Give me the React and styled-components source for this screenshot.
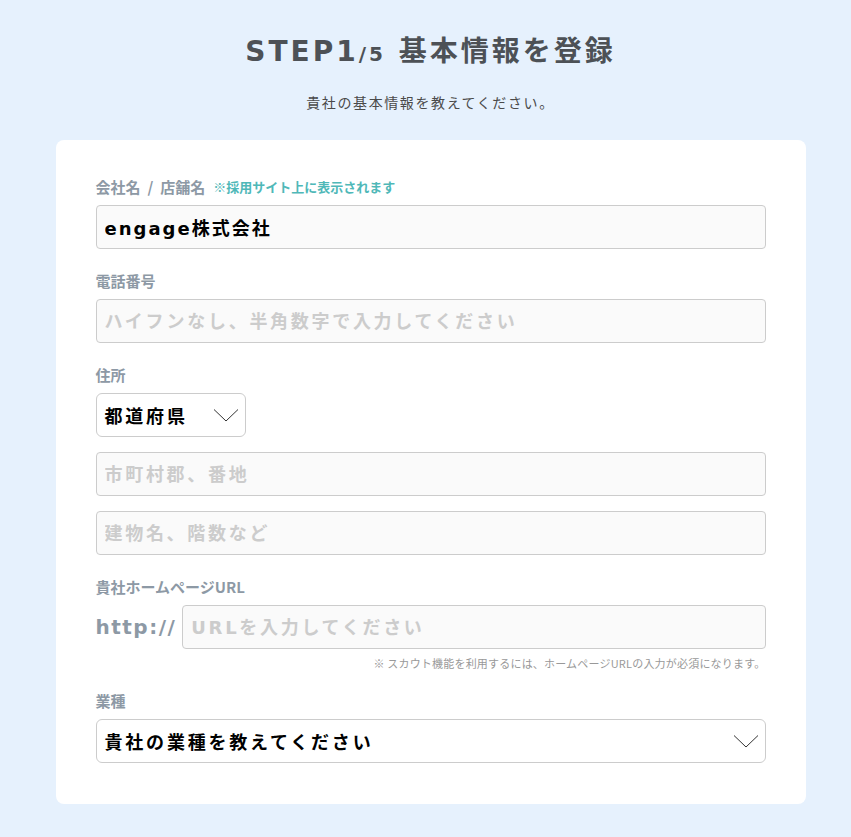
import React from 'react';
import styled, { createGlobalStyle } from 'styled-components';

const GlobalStyle = createGlobalStyle`
  body {
    margin: 0;
    background: #e6f1fd;
    font-family: "DejaVu Sans", "Noto Sans CJK JP", sans-serif;
  }
`;

const Chevron = ({ size = 26 }) => (
  <svg width={size} height={size / 2 + 2} viewBox="0 0 26 15" fill="none">
    <path d="M1 1.5 L13 13 L25 1.5" stroke="#333" strokeWidth="1" />
  </svg>
);

const App = () => (
  <Page>
    <GlobalStyle />
    <Title>
      STEP1<Small>/5</Small> 基本情報を登録
    </Title>
    <Lead>貴社の基本情報を教えてください。</Lead>
    <Card>
      <Field>
        <Label>
          会社名<Slash>/</Slash>店舗名<Note>※採用サイト上に表示されます</Note>
        </Label>
        <Input defaultValue="engage株式会社" />
      </Field>

      <Field>
        <Label>電話番号</Label>
        <Input placeholder="ハイフンなし、半角数字で入力してください" />
      </Field>

      <Field>
        <Label>住所</Label>
        <Stack>
          <Select $width="150px">
            <span>都道府県</span>
            <Chevron />
          </Select>
          <Input placeholder="市町村郡、番地" />
          <Input placeholder="建物名、階数など" />
        </Stack>
      </Field>

      <Field>
        <Label>貴社ホームページURL</Label>
        <UrlRow>
          <Prefix>http://</Prefix>
          <Input placeholder="URLを入力してください" />
        </UrlRow>
        <Hint>※ スカウト機能を利用するには、ホームページURLの入力が必須になります。</Hint>
      </Field>

      <Field>
        <Label>業種</Label>
        <Select>
          <span>貴社の業種を教えてください</span>
          <Chevron />
        </Select>
      </Field>
    </Card>
  </Page>
);

export default App;

// Styling
const Page = styled.div`
  display: flex;
  flex-direction: column;
  align-items: center;
  padding: 32px 0 34px 10px;
`;

const Title = styled.h1`
  margin: 0;
  font-size: 28px;
  line-height: 40px;
  font-weight: bold;
  letter-spacing: 3px;
  color: #4d5156;
`;

const Small = styled.span`
  font-size: 20px;
`;

const Lead = styled.p`
  margin: 18px 0 0;
  font-family: "Noto Sans CJK JP", sans-serif;
  font-size: 14px;
  line-height: 20px;
  letter-spacing: 1.6px;
  color: #4a4a4a;
`;

const Card = styled.div`
  margin-top: 28px;
  width: 750px;
  box-sizing: border-box;
  padding: 38px 40px 41px;
  background: #fff;
  border-radius: 8px;
  display: flex;
  flex-direction: column;
  gap: 23px;
`;

const Field = styled.div`
  display: flex;
  flex-direction: column;
`;

const Label = styled.div`
  height: 18px;
  display: flex;
  align-items: center;
  font-family: "Noto Sans CJK JP", sans-serif;
  font-size: 15px;
  line-height: 18px;
  font-weight: bold;
  color: #8d99a5;
  margin-bottom: 9px;
`;

const Slash = styled.span`
  margin: 0 7px;
`;

const Note = styled.span`
  margin-left: 8px;
  font-size: 13px;
  color: #4fb8b8;
`;

const Input = styled.input`
  box-sizing: border-box;
  width: 100%;
  height: 44px;
  padding: 0 8px;
  border: 1px solid #ccc;
  border-radius: 4px;
  background: #fafafa;
  font-family: "DejaVu Sans", "Noto Sans CJK JP", sans-serif;
  font-size: 18px;
  font-weight: bold;
  letter-spacing: 2px;
  color: #000;
  outline: none;

  &::placeholder {
    color: #ccc;
    letter-spacing: 2.7px;
  }
`;

const Stack = styled.div`
  display: flex;
  flex-direction: column;
  gap: 15px;
`;

const Select = styled.div`
  box-sizing: border-box;
  width: ${p => p.$width || '100%'};
  height: 44px;
  padding: 0 6px 0 8px;
  border: 1px solid #ccc;
  border-radius: 6px;
  background: #fff;
  display: flex;
  align-items: center;
  justify-content: space-between;
  font-family: "DejaVu Sans", "Noto Sans CJK JP", sans-serif;
  font-size: 18px;
  font-weight: bold;
  letter-spacing: 2.8px;
  color: #000;
`;

const UrlRow = styled.div`
  display: flex;
  align-items: center;
  gap: 6px;
`;

const Prefix = styled.span`
  flex-shrink: 0;
  font-size: 20px;
  font-weight: bold;
  letter-spacing: 1.5px;
  color: #8d99a5;
`;

const Hint = styled.div`
  margin: 8px 0 0;
  text-align: right;
  font-family: "Noto Sans CJK JP", sans-serif;
  font-size: 11px;
  line-height: 12px;
  letter-spacing: 0.2px;
  color: #999;
`;
